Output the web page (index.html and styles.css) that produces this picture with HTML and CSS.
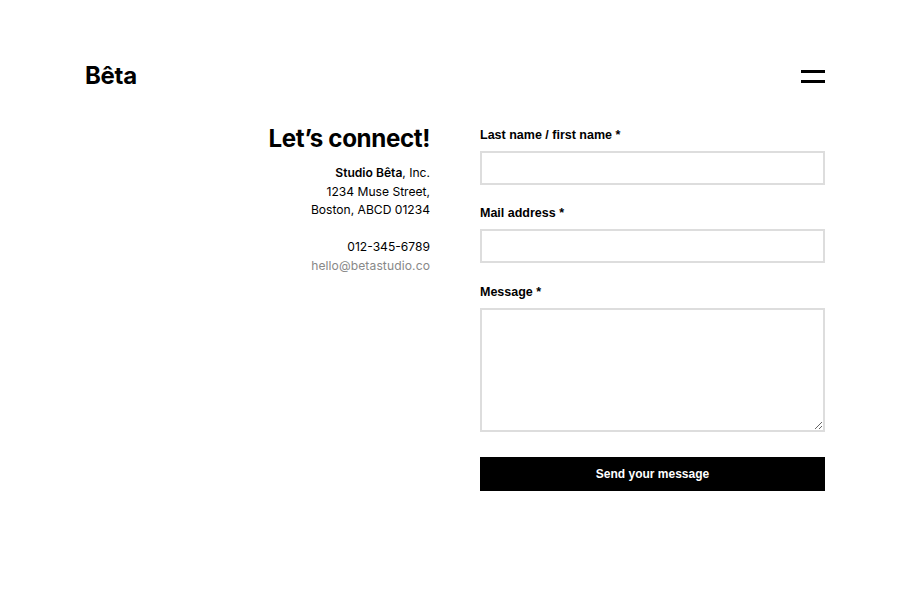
FILE: index.html
```html
<!DOCTYPE html>
<html lang="en">
<head>
<meta charset="utf-8">
<title>Bêta — Contact</title>
<link rel="stylesheet" href="styles.css">
</head>
<body>
<div class="page">
  <header class="header">
    <div class="logo">Bêta</div>
    <button class="menu" aria-label="Menu"><span></span><span></span></button>
  </header>
  <main class="main">
    <section class="info">
      <h1 class="title">Let’s connect!</h1>
      <p class="address"><strong>Studio Bêta</strong>, Inc.<br>1234 Muse Street,<br>Boston, ABCD 01234</p>
      <p class="contact">012-345-6789<br><span class="mail">hello@betastudio.co</span></p>
    </section>
    <form class="form">
      <div class="field">
        <label class="label">Last name / first name *</label>
        <input class="input" type="text">
      </div>
      <div class="field">
        <label class="label">Mail address *</label>
        <input class="input" type="email">
      </div>
      <div class="field field-message">
        <label class="label">Message *</label>
        <textarea class="textarea"></textarea>
      </div>
      <button class="submit" type="button">Send your message</button>
    </form>
  </main>
</div>
</body>
</html>
```
FILE: styles.css
```css
* { box-sizing: border-box; }
html, body { margin: 0; padding: 0; background: #fff; }
body { font-family: Inter, "Liberation Sans", sans-serif; color: #000; }
.page { width: 740px; margin: 0 auto; padding-top: 61px; }
.header { display: flex; justify-content: space-between; align-items: center; height: 30px; }
.logo { font-family: Inter, sans-serif; font-weight: 700; font-size: 24px; letter-spacing: -0.3px; line-height: 30px; }
.menu { border: 0; background: none; padding: 0; width: 24px; height: 13px; display: flex; flex-direction: column; justify-content: space-between; cursor: pointer; }
.menu span { display: block; height: 3px; background: #000; width: 24px; }
.main { display: grid; grid-template-columns: 345px 345px; column-gap: 50px; margin-top: 36px; }
.info { text-align: right; }
.title { margin: 0; font-size: 24.2px; font-weight: 700; line-height: 24px; letter-spacing: -0.4px; }
.address, .contact { margin: 0; font-size: 12.1px; line-height: 18.6px; }
.address { margin-top: 13px; }
.address strong { font-weight: 600; }
.contact { margin-top: 18.5px; }
.mail { color: #888; letter-spacing: 0.1px; }
.form { display: flex; flex-direction: column; }
.field { display: flex; flex-direction: column; margin-bottom: 20px; }
.field-message { margin-top: 1px; margin-bottom: 19px; }
.label { font-family: "Liberation Sans", Arial, sans-serif; font-weight: 700; font-size: 12.5px; line-height: 16px; margin-bottom: 8px; }
.field-message .label { margin-bottom: 8px; }
.input { height: 34px; border: 2px solid #ddd; background: #fff; font-size: 13px; padding: 0 8px; }
.textarea { height: 124px; border: 2px solid #ddd; background: #fff; resize: vertical; font-size: 13px; padding: 8px; }
.submit { margin-top: 6px; height: 34px; background: #000; color: #fff; border: 0; font-family: "Liberation Sans", Arial, sans-serif; font-weight: 700; font-size: 12px; cursor: pointer; }
```
